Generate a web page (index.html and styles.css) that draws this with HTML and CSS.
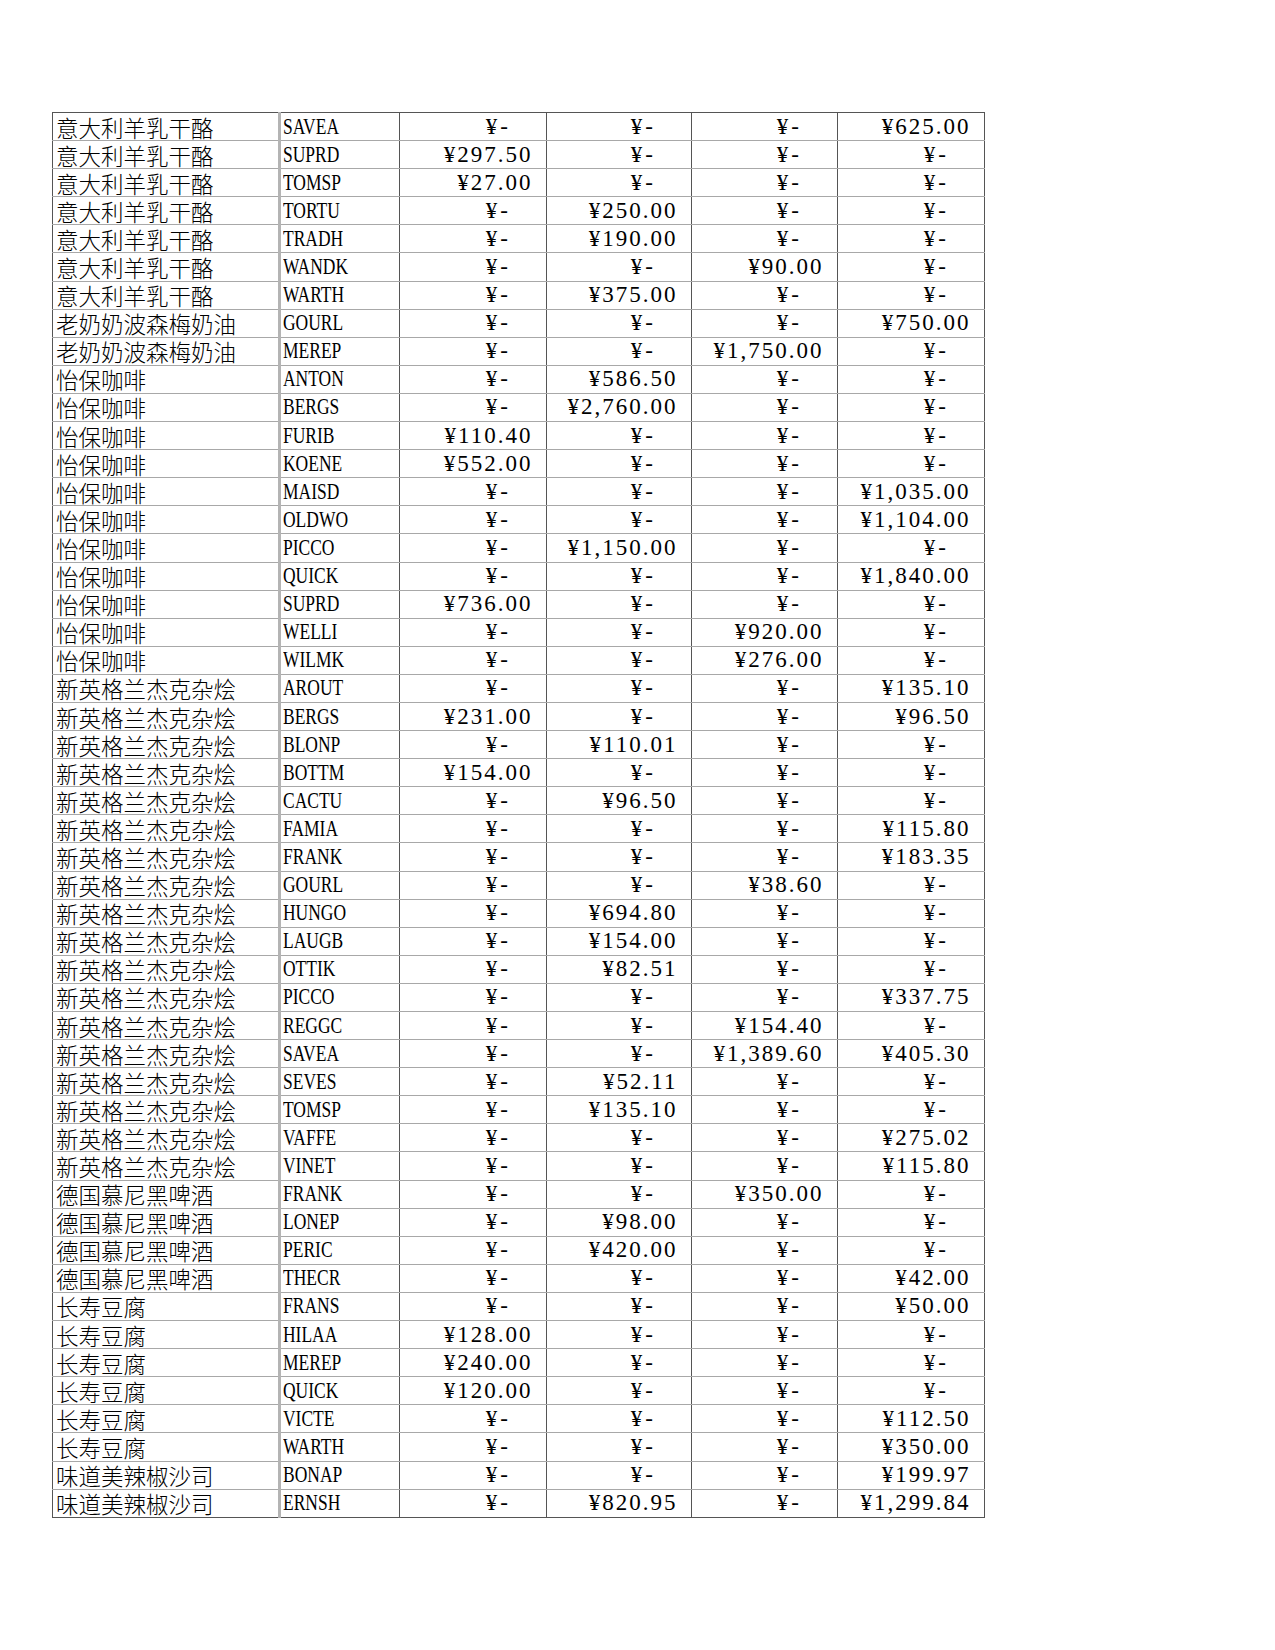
FILE: index.html
```html
<!DOCTYPE html>
<html lang="zh-CN">
<head>
<meta charset="utf-8">
<title>Sheet</title>
<link rel="stylesheet" href="styles.css">
</head>
<body>
<table class="sheet">
<colgroup>
<col class="c-name"><col class="c-code"><col class="c-q1"><col class="c-q2"><col class="c-q3"><col class="c-q4">
</colgroup>
<tbody>
<tr><td class="nm">意大利羊乳干酪</td><td class="cd"><span>SAVEA</span></td><td class="d">¥-</td><td class="d">¥-</td><td class="d">¥-</td><td class="n">¥625.00</td></tr>
<tr><td class="nm">意大利羊乳干酪</td><td class="cd"><span>SUPRD</span></td><td class="n">¥297.50</td><td class="d">¥-</td><td class="d">¥-</td><td class="d">¥-</td></tr>
<tr><td class="nm">意大利羊乳干酪</td><td class="cd"><span>TOMSP</span></td><td class="n">¥27.00</td><td class="d">¥-</td><td class="d">¥-</td><td class="d">¥-</td></tr>
<tr><td class="nm">意大利羊乳干酪</td><td class="cd"><span>TORTU</span></td><td class="d">¥-</td><td class="n">¥250.00</td><td class="d">¥-</td><td class="d">¥-</td></tr>
<tr><td class="nm">意大利羊乳干酪</td><td class="cd"><span>TRADH</span></td><td class="d">¥-</td><td class="n">¥190.00</td><td class="d">¥-</td><td class="d">¥-</td></tr>
<tr><td class="nm">意大利羊乳干酪</td><td class="cd"><span>WANDK</span></td><td class="d">¥-</td><td class="d">¥-</td><td class="n">¥90.00</td><td class="d">¥-</td></tr>
<tr><td class="nm">意大利羊乳干酪</td><td class="cd"><span>WARTH</span></td><td class="d">¥-</td><td class="n">¥375.00</td><td class="d">¥-</td><td class="d">¥-</td></tr>
<tr><td class="nm">老奶奶波森梅奶油</td><td class="cd"><span>GOURL</span></td><td class="d">¥-</td><td class="d">¥-</td><td class="d">¥-</td><td class="n">¥750.00</td></tr>
<tr><td class="nm">老奶奶波森梅奶油</td><td class="cd"><span>MEREP</span></td><td class="d">¥-</td><td class="d">¥-</td><td class="n">¥1,750.00</td><td class="d">¥-</td></tr>
<tr><td class="nm">怡保咖啡</td><td class="cd"><span>ANTON</span></td><td class="d">¥-</td><td class="n">¥586.50</td><td class="d">¥-</td><td class="d">¥-</td></tr>
<tr><td class="nm">怡保咖啡</td><td class="cd"><span>BERGS</span></td><td class="d">¥-</td><td class="n">¥2,760.00</td><td class="d">¥-</td><td class="d">¥-</td></tr>
<tr><td class="nm">怡保咖啡</td><td class="cd"><span>FURIB</span></td><td class="n">¥110.40</td><td class="d">¥-</td><td class="d">¥-</td><td class="d">¥-</td></tr>
<tr><td class="nm">怡保咖啡</td><td class="cd"><span>KOENE</span></td><td class="n">¥552.00</td><td class="d">¥-</td><td class="d">¥-</td><td class="d">¥-</td></tr>
<tr><td class="nm">怡保咖啡</td><td class="cd"><span>MAISD</span></td><td class="d">¥-</td><td class="d">¥-</td><td class="d">¥-</td><td class="n">¥1,035.00</td></tr>
<tr><td class="nm">怡保咖啡</td><td class="cd"><span>OLDWO</span></td><td class="d">¥-</td><td class="d">¥-</td><td class="d">¥-</td><td class="n">¥1,104.00</td></tr>
<tr><td class="nm">怡保咖啡</td><td class="cd"><span>PICCO</span></td><td class="d">¥-</td><td class="n">¥1,150.00</td><td class="d">¥-</td><td class="d">¥-</td></tr>
<tr><td class="nm">怡保咖啡</td><td class="cd"><span>QUICK</span></td><td class="d">¥-</td><td class="d">¥-</td><td class="d">¥-</td><td class="n">¥1,840.00</td></tr>
<tr><td class="nm">怡保咖啡</td><td class="cd"><span>SUPRD</span></td><td class="n">¥736.00</td><td class="d">¥-</td><td class="d">¥-</td><td class="d">¥-</td></tr>
<tr><td class="nm">怡保咖啡</td><td class="cd"><span>WELLI</span></td><td class="d">¥-</td><td class="d">¥-</td><td class="n">¥920.00</td><td class="d">¥-</td></tr>
<tr><td class="nm">怡保咖啡</td><td class="cd"><span>WILMK</span></td><td class="d">¥-</td><td class="d">¥-</td><td class="n">¥276.00</td><td class="d">¥-</td></tr>
<tr><td class="nm">新英格兰杰克杂烩</td><td class="cd"><span>AROUT</span></td><td class="d">¥-</td><td class="d">¥-</td><td class="d">¥-</td><td class="n">¥135.10</td></tr>
<tr><td class="nm">新英格兰杰克杂烩</td><td class="cd"><span>BERGS</span></td><td class="n">¥231.00</td><td class="d">¥-</td><td class="d">¥-</td><td class="n">¥96.50</td></tr>
<tr><td class="nm">新英格兰杰克杂烩</td><td class="cd"><span>BLONP</span></td><td class="d">¥-</td><td class="n">¥110.01</td><td class="d">¥-</td><td class="d">¥-</td></tr>
<tr><td class="nm">新英格兰杰克杂烩</td><td class="cd"><span>BOTTM</span></td><td class="n">¥154.00</td><td class="d">¥-</td><td class="d">¥-</td><td class="d">¥-</td></tr>
<tr><td class="nm">新英格兰杰克杂烩</td><td class="cd"><span>CACTU</span></td><td class="d">¥-</td><td class="n">¥96.50</td><td class="d">¥-</td><td class="d">¥-</td></tr>
<tr><td class="nm">新英格兰杰克杂烩</td><td class="cd"><span>FAMIA</span></td><td class="d">¥-</td><td class="d">¥-</td><td class="d">¥-</td><td class="n">¥115.80</td></tr>
<tr><td class="nm">新英格兰杰克杂烩</td><td class="cd"><span>FRANK</span></td><td class="d">¥-</td><td class="d">¥-</td><td class="d">¥-</td><td class="n">¥183.35</td></tr>
<tr><td class="nm">新英格兰杰克杂烩</td><td class="cd"><span>GOURL</span></td><td class="d">¥-</td><td class="d">¥-</td><td class="n">¥38.60</td><td class="d">¥-</td></tr>
<tr><td class="nm">新英格兰杰克杂烩</td><td class="cd"><span>HUNGO</span></td><td class="d">¥-</td><td class="n">¥694.80</td><td class="d">¥-</td><td class="d">¥-</td></tr>
<tr><td class="nm">新英格兰杰克杂烩</td><td class="cd"><span>LAUGB</span></td><td class="d">¥-</td><td class="n">¥154.00</td><td class="d">¥-</td><td class="d">¥-</td></tr>
<tr><td class="nm">新英格兰杰克杂烩</td><td class="cd"><span>OTTIK</span></td><td class="d">¥-</td><td class="n">¥82.51</td><td class="d">¥-</td><td class="d">¥-</td></tr>
<tr><td class="nm">新英格兰杰克杂烩</td><td class="cd"><span>PICCO</span></td><td class="d">¥-</td><td class="d">¥-</td><td class="d">¥-</td><td class="n">¥337.75</td></tr>
<tr><td class="nm">新英格兰杰克杂烩</td><td class="cd"><span>REGGC</span></td><td class="d">¥-</td><td class="d">¥-</td><td class="n">¥154.40</td><td class="d">¥-</td></tr>
<tr><td class="nm">新英格兰杰克杂烩</td><td class="cd"><span>SAVEA</span></td><td class="d">¥-</td><td class="d">¥-</td><td class="n">¥1,389.60</td><td class="n">¥405.30</td></tr>
<tr><td class="nm">新英格兰杰克杂烩</td><td class="cd"><span>SEVES</span></td><td class="d">¥-</td><td class="n">¥52.11</td><td class="d">¥-</td><td class="d">¥-</td></tr>
<tr><td class="nm">新英格兰杰克杂烩</td><td class="cd"><span>TOMSP</span></td><td class="d">¥-</td><td class="n">¥135.10</td><td class="d">¥-</td><td class="d">¥-</td></tr>
<tr><td class="nm">新英格兰杰克杂烩</td><td class="cd"><span>VAFFE</span></td><td class="d">¥-</td><td class="d">¥-</td><td class="d">¥-</td><td class="n">¥275.02</td></tr>
<tr><td class="nm">新英格兰杰克杂烩</td><td class="cd"><span>VINET</span></td><td class="d">¥-</td><td class="d">¥-</td><td class="d">¥-</td><td class="n">¥115.80</td></tr>
<tr><td class="nm">德国慕尼黑啤酒</td><td class="cd"><span>FRANK</span></td><td class="d">¥-</td><td class="d">¥-</td><td class="n">¥350.00</td><td class="d">¥-</td></tr>
<tr><td class="nm">德国慕尼黑啤酒</td><td class="cd"><span>LONEP</span></td><td class="d">¥-</td><td class="n">¥98.00</td><td class="d">¥-</td><td class="d">¥-</td></tr>
<tr><td class="nm">德国慕尼黑啤酒</td><td class="cd"><span>PERIC</span></td><td class="d">¥-</td><td class="n">¥420.00</td><td class="d">¥-</td><td class="d">¥-</td></tr>
<tr><td class="nm">德国慕尼黑啤酒</td><td class="cd"><span>THECR</span></td><td class="d">¥-</td><td class="d">¥-</td><td class="d">¥-</td><td class="n">¥42.00</td></tr>
<tr><td class="nm">长寿豆腐</td><td class="cd"><span>FRANS</span></td><td class="d">¥-</td><td class="d">¥-</td><td class="d">¥-</td><td class="n">¥50.00</td></tr>
<tr><td class="nm">长寿豆腐</td><td class="cd"><span>HILAA</span></td><td class="n">¥128.00</td><td class="d">¥-</td><td class="d">¥-</td><td class="d">¥-</td></tr>
<tr><td class="nm">长寿豆腐</td><td class="cd"><span>MEREP</span></td><td class="n">¥240.00</td><td class="d">¥-</td><td class="d">¥-</td><td class="d">¥-</td></tr>
<tr><td class="nm">长寿豆腐</td><td class="cd"><span>QUICK</span></td><td class="n">¥120.00</td><td class="d">¥-</td><td class="d">¥-</td><td class="d">¥-</td></tr>
<tr><td class="nm">长寿豆腐</td><td class="cd"><span>VICTE</span></td><td class="d">¥-</td><td class="d">¥-</td><td class="d">¥-</td><td class="n">¥112.50</td></tr>
<tr><td class="nm">长寿豆腐</td><td class="cd"><span>WARTH</span></td><td class="d">¥-</td><td class="d">¥-</td><td class="d">¥-</td><td class="n">¥350.00</td></tr>
<tr><td class="nm">味道美辣椒沙司</td><td class="cd"><span>BONAP</span></td><td class="d">¥-</td><td class="d">¥-</td><td class="d">¥-</td><td class="n">¥199.97</td></tr>
<tr><td class="nm">味道美辣椒沙司</td><td class="cd"><span>ERNSH</span></td><td class="d">¥-</td><td class="n">¥820.95</td><td class="d">¥-</td><td class="n">¥1,299.84</td></tr>
</tbody>
</table>
</body>
</html>
```

FILE: styles.css
```css
html, body {
  margin: 0;
  padding: 0;
  background: #ffffff;
}

body {
  padding: 112px 0 0 52px;
  font-family: "Liberation Serif", "Noto Sans CJK SC", serif;
  color: #000;
}

.sheet {
  border-collapse: collapse;
  table-layout: fixed;
  width: 932px;
  border: 1px solid #555;
}

.c-name { width: 227px; }
.c-code { width: 120px; }
.c-q1 { width: 147px; }
.c-q2 { width: 145px; }
.c-q3 { width: 146px; }
.c-q4 { width: 147px; }

.sheet tr {
  height: 28.1px;
}

.sheet td {
  padding: 0;
  border-top: 1px solid #a8a8a8;
  border-bottom: 1px solid #a8a8a8;
  border-left: 1px solid #555;
  border-right: 1px solid #555;
  font-size: 23px;
  line-height: 24px;
  white-space: nowrap;
  vertical-align: middle;
}

.sheet tr:first-child td {
  border-top: 1px solid #555;
}

.sheet tr:last-child td {
  border-bottom: 1px solid #555;
}

.sheet td.nm {
  font-family: "Noto Sans CJK SC", sans-serif;
  font-size: 22.5px;
  line-height: 24px;
  padding-left: 3px;
  border-right: 3px solid #b4b4b4;
  font-weight: 300;
}

.sheet td.cd {
  padding-left: 2px;
  border-left: 3px solid #b4b4b4;
}

.cd span {
  display: inline-block;
  transform: scaleX(0.76);
  transform-origin: left center;
}

.sheet td.n {
  text-align: right;
  padding-right: 13.5px;
  letter-spacing: 2px;
}

.sheet td.d {
  text-align: right;
  padding-right: 35px;
  letter-spacing: 3px;
}
```
